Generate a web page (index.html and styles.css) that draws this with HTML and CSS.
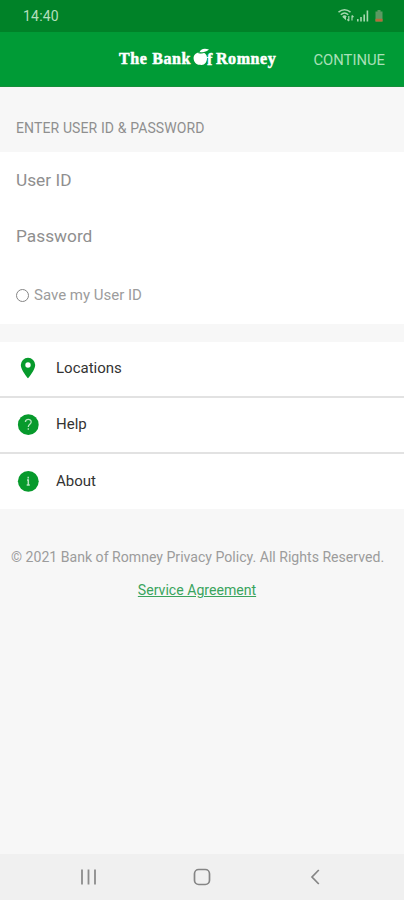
FILE: index.html
```
<!DOCTYPE html>
<html lang="en">
<head>
<meta charset="utf-8">
<title>The Bank of Romney</title>
<link rel="stylesheet" href="styles.css">
</head>
<body>
<div class="status">
  <span class="clock">14:40</span>
  <svg class="status-icons" width="48" height="16" viewBox="0 0 48 16" fill="none">
    <path d="M.5 4.200Q6.500 -.8 12.500 4.200M2.800 6.800Q6.500 3.300 10.300 6.800M4.800 9Q6.500 7.300 8.200 9" stroke="#a5d8ae" stroke-width="1.500"/>
    <path d="M4.500 9L8 12.300V9Z" fill="#a5d8ae"/>
    <path d="M10.800 13V8M9.300 11.300l1.500 1.700M14 7.500v5M14 7.500l1.500 1.700" stroke="#a5d8ae" stroke-width="1.200"/>
    <path d="M19.800 11v2.500M23 9v4.500M26.200 6.500v7M29.400 2.500v11" stroke="#a5d8ae" stroke-width="1.600"/>
    <path d="M37.500 3.500h2V2h3v1.500h2v10h-7Z" fill="#5c9a62"/>
    <path d="M37.500 10.800h7v2.700h-7Z" fill="#b8693a"/>
  </svg>
</div>
<header class="bar">
  <div class="brand">
    <span class="the-bank">The Bank</span>
    <span class="of"><svg class="apple" width="19" height="20" viewBox="0 0 19 20"><path d="M7.500 5.200C4 3.600 .4 6.400 .6 10.500C.8 14.500 4.200 17.600 7.300 16.700C11 17.800 14 14.500 14 10C14 6 11 3.800 7.500 5.200Z" fill="#fff"/><path d="M6.500 4.300C7.500 1 11-.3 16 1.500C13.500 4 10 4.500 6.500 4.300Z" fill="#fff"/><path d="M5.500 5Q8.500 5.900 12.500 4" stroke="#009b36" stroke-width=".8" fill="none"/></svg><span class="f">f</span></span>
    <span class="romney">Romney</span>
  </div>
  <span class="continue">CONTINUE</span>
</header>
<main>
  <h1 class="section"><span>ENTER USER ID &amp; PASSWORD</span></h1>
  <div class="form">
    <div class="field">User ID</div>
    <div class="field password">Password</div>
    <div class="save"><span class="radio"></span><span>Save my User ID</span></div>
  </div>
  <nav class="menu">
    <div class="row"><svg width="24" height="24" viewBox="0 0 24 24"><path d="M12 1.800a7.200 7.200 0 0 0-7.200 7.200C4.800 14.200 12 22.300 12 22.300S19.200 14.200 19.200 9A7.200 7.200 0 0 0 12 1.800Zm0 4.500a2.700 2.700 0 1 1 0 5.400a2.700 2.700 0 0 1 0-5.400Z" fill="#079a2c" fill-rule="evenodd"/></svg><span class="locations">Locations</span></div>
    <div class="row"><svg width="24" height="24" viewBox="0 0 24 24"><circle cx="12.300" cy="12.700" r="10.400" fill="#079a2c"/><path d="M9.400 10.100C9.400 6.500 15.200 6.600 15.200 10C15.200 12.200 12.300 12.300 12.300 14.900M12.300 16.300v1.500" stroke="#b9e4c2" stroke-width="1.300" fill="none"/></svg><span class="help">Help</span></div>
    <div class="row"><svg width="24" height="24" viewBox="0 0 24 24"><circle cx="12.300" cy="12.300" r="10.400" fill="#079a2c"/><path d="M12.200 7.800v1.700M11 11h1.300v5M10.700 16h3.100" stroke="#b9e4c2" stroke-width="1.500" fill="none"/></svg><span class="about">About</span></div>
  </nav>
  <footer class="legal">
    <p class="copyright">© 2021 Bank of Romney Privacy Policy. All Rights Reserved.</p>
    <a class="agreement">Service Agreement</a>
  </footer>
</main>
<div class="system">
  <svg width="24" height="24" viewBox="0 0 24 24"><path d="M6 4.500v15M12.500 4.500v15M19 4.500v15" stroke="#8c8c8c" stroke-width="1.800"/></svg>
  <svg width="24" height="24" viewBox="0 0 24 24"><rect x="4.500" y="4.500" width="15" height="15" rx="4.200" stroke="#858585" stroke-width="1.700" fill="none"/></svg>
  <svg width="24" height="24" viewBox="0 0 24 24"><path d="M14.800 5L8 12L14.800 19" stroke="#858585" stroke-width="1.700" fill="none"/></svg>
</div>
</body>
</html>
```
FILE: styles.css
```
* { box-sizing: border-box; }
body { margin: 0; width: 404px; height: 900px; display: flex; flex-direction: column; background: #f7f7f7; font-family: Roboto, "Liberation Sans", sans-serif; color: #8f8f8f; overflow: hidden; }
svg { display: block; flex: none; }
span, p, a { white-space: nowrap; }
.status { height: 32px; background: #008228; display: flex; align-items: center; justify-content: space-between; padding: 0 16px 0 23px; }
.clock { font-size: 14px; letter-spacing: .2px; color: #b5dfbd; }
.status-icons { margin-right: 2px; }
.bar { height: 55px; background: #009b36; border-bottom: 1px solid #168f3a; display: flex; align-items: center; justify-content: space-between; padding: 0 19px 0 119px; }
.brand { display: flex; align-items: center; height: 20px; color: #fff; font: bold 16px/20px "Liberation Serif", serif; -webkit-text-stroke: .5px #fff; }
.the-bank { width: 73px; letter-spacing: .62px; }
.of { display: flex; position: relative; width: 22px; margin-left: 1px; }
.apple { margin-top: -2px; }
.f { position: absolute; left: 14px; top: 0; }
.romney { margin-left: 1px; letter-spacing: .55px; }
.continue { font-size: 14.8px; padding-top: 1px; color: #a9e0b8; }
main { flex: 1; }
.section { margin: 0; height: 65px; padding: 33px 16px 0; font-size: 14px; letter-spacing: .12px; line-height: 17px; font-weight: 400; }
.form { height: 172px; background: #fff; padding: 0 16px; }
.field { height: 56px; line-height: 57px; font-size: 17.3px; }
.password { line-height: 56px; }
.save { height: 60px; display: flex; align-items: center; gap: 5px; font-size: 15px; padding-top: 2px; color: #9c9c9c; }
.radio { width: 13px; height: 13px; border: 1.500px solid #858585; border-radius: 50%; }
.menu { margin-top: 18px; background: #fff; }
.row { height: 56px; padding: 0 16px 2px; display: flex; align-items: center; gap: 16px; border-bottom: 2px solid #e2e2e2; font-size: 15px; color: #333; }
.row:last-child { height: 55px; border-bottom: 0; }
.legal { padding: 39px 11px 0; display: flex; flex-direction: column; font-size: 14.1px; line-height: 18px; color: #9c9c9c; }
.copyright { margin: 0 0 15px; }
.agreement { align-self: center; margin-right: 10px; color: #3aa45d; text-decoration: underline; }
.system { height: 46px; background: #f0f0f0; display: flex; align-items: center; justify-content: space-between; padding: 0 76px; }
```
